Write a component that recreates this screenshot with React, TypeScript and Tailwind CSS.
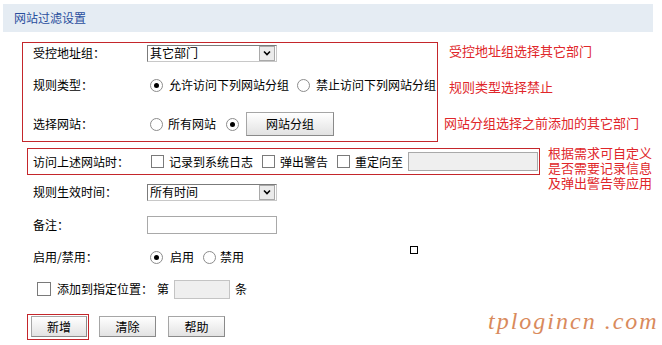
import React from 'react'

const font = { fontFamily: '"Noto Sans CJK SC", "Liberation Sans", sans-serif' }

function Radio({ checked }: { checked?: boolean }) {
  return (
    <span className="w-[13px] h-[13px] rounded-full border border-[#8c8c8c] bg-white flex items-center justify-center shrink-0">
      {checked && <span className="w-[5px] h-[5px] rounded-full bg-black" />}
    </span>
  )
}

function Check() {
  return <span className="block w-[13px] h-[13px] border border-[#7a7a7a] bg-white shrink-0" />
}

function Select({ value }: { value: string }) {
  return (
    <div className="w-[130px] h-[17px] border border-[#7b7b7b] border-r-[#c8c8c8] border-b-[#c8c8c8] bg-white flex items-center">
      <span className="flex-1 pl-[2px] leading-none">{value}</span>
      <span className="w-[16px] h-[15px] border border-[#a9a9a9] bg-[#ebebeb] flex items-center justify-center mr-[1px]">
        <svg width="8" height="6" viewBox="0 0 8 6">
          <path d="M1 1.5 L4 4.5 L7 1.5" stroke="#000" strokeWidth="1.6" fill="none" />
        </svg>
      </span>
    </div>
  )
}

function Btn({ label, w }: { label: string; w: string }) {
  return (
    <button
      className={`${w} h-[21px] border border-[#a6a6a6] border-b-[#8a8a8a] border-r-[#8a8a8a] bg-gradient-to-b from-white to-[#e2e2e2] text-[12px] text-black flex items-center justify-center`}
    >
      {label}
    </button>
  )
}

function Label({ children }: { children: React.ReactNode }) {
  return <span className="w-[114px] shrink-0">{children}</span>
}

export default function App() {
  return (
    <div className="w-[662px] h-[345px] bg-white text-[12px] text-black pt-[4px] overflow-hidden" style={font}>
      <div className="ml-[3px] w-[650px] h-[28px] bg-[#e5ecf3] flex items-center pl-[11px] text-[#2a4f9e] text-[12px]">
        网站过滤设置
      </div>

      <div className="flex mt-[10px]">
        <div className="ml-[22px] w-[416px] border border-[#c4262b] pl-[10px]">
          <div className="h-[20px] flex items-center">
            <Label>受控地址组：</Label>
            <Select value="其它部门" />
          </div>
          <div className="h-[44px] flex items-center">
            <Label>规则类型：</Label>
            <span className="ml-[3px]"><Radio checked /></span>
            <span className="ml-[6px]">允许访问下列网站分组</span>
            <span className="ml-[8px]"><Radio /></span>
            <span className="ml-[6px]">禁止访问下列网站分组</span>
          </div>
          <div className="h-[34px] flex items-center">
            <Label>选择网站：</Label>
            <span className="ml-[3px]"><Radio /></span>
            <span className="ml-[5px]">所有网站</span>
            <span className="ml-[10px]"><Radio checked /></span>
            <span className="ml-[7px]">
              <Btn label="网站分组" w="w-[88px] h-[24px]" />
            </span>
          </div>
        </div>
        <div className="text-[13px] text-[#e0262a] leading-[15px]">
          <div className="ml-[11px] mt-[1px]">受控地址组选择其它部门</div>
          <div className="ml-[11px] mt-[21px]">规则类型选择禁止</div>
          <div className="ml-[6px] mt-[21px]">网站分组选择之前添加的其它部门</div>
        </div>
      </div>

      <div className="flex mt-[6px] h-[27px]">
        <div className="ml-[27px] w-[513px] h-[27px] border border-[#c4262b] pl-[5px] flex items-center">
          <Label>访问上述网站时：</Label>
          <span className="ml-[4px]"><Check /></span>
          <span className="ml-[5px] mr-[9px]">记录到系统日志</span>
          <Check />
          <span className="ml-[5px] mr-[9px]">弹出警告</span>
          <Check />
          <span className="ml-[5px]">重定向至</span>
          <span className="ml-[5px] w-[130px] h-[19px] bg-[#efefef] border border-[#a9a9a9]" />
        </div>
        <div className="ml-[8px] -mt-[3px] text-[13px] text-[#e0262a] leading-[15px]">
          <div>根据需求可自定义</div>
          <div>是否需要记录信息</div>
          <div>及弹出警告等应用</div>
        </div>
      </div>

      <div className="pl-[33px]">
        <div className="h-[34px] flex items-center">
          <Label>规则生效时间：</Label>
          <Select value="所有时间" />
        </div>
        <div className="h-[32px] flex items-center">
          <Label>备注：</Label>
          <span className="w-[130px] h-[18px] bg-white border border-[#a9a9a9]" />
        </div>
        <div className="h-[32px] flex items-center">
          <Label>启用/禁用：</Label>
          <span className="ml-[3px]"><Radio checked /></span>
          <span className="ml-[7px]">启用</span>
          <span className="ml-[9px]"><Radio /></span>
          <span className="ml-[4px]">禁用</span>
          <span className="self-start mt-[5px] ml-[166px] w-[8px] h-[8px] border border-black" />
        </div>
        <div className="h-[32px] flex items-center pl-[4px]">
          <span className="w-[14px] h-[14px] border border-[#7a7a7a] bg-white" />
          <span className="ml-[6px]">添加到指定位置：</span>
          <span className="ml-[4px]">第</span>
          <span className="ml-[5px] w-[56px] h-[19px] bg-[#efefef] border border-[#c4c4c4]" />
          <span className="ml-[5px]">条</span>
        </div>
      </div>

      <div className="flex items-start mt-[9px]">
        <div className="ml-[27px] border border-[#c4262b] pl-[3px] pr-[1px] pt-[1px] pb-[2px]">
          <Btn label="新增" w="w-[56px]" />
        </div>
        <div className="ml-[10px] mt-[2px]">
          <Btn label="清除" w="w-[57px]" />
        </div>
        <div className="ml-[12px] mt-[2px]">
          <Btn label="帮助" w="w-[57px]" />
        </div>
        <div
          className="ml-[263px] -mt-[5px] text-[24px] leading-[24px] italic text-[#d98a5c] tracking-[2px] whitespace-nowrap"
          style={{ fontFamily: '"Liberation Serif", serif' }}
        >
          tplogincn .com
        </div>
      </div>
    </div>
  )
}
